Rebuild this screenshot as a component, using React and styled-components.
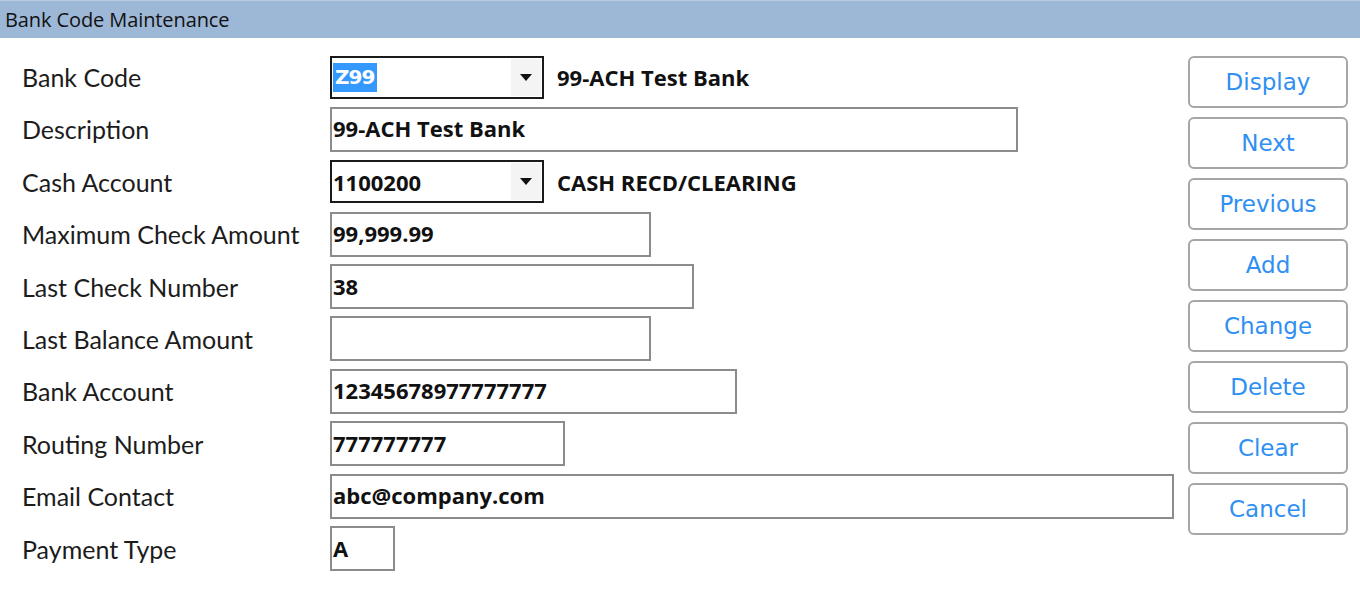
import React from "react";
import styled, { createGlobalStyle } from "styled-components";

const GlobalStyle = createGlobalStyle`
  html, body {
    margin: 0;
    padding: 0;
    background: #ffffff;
  }
  body {
    font-family: "Lato", "Open Sans", sans-serif;
  }
`;

const Window = styled.div`
  width: 1360px;
  height: 615px;
  background: #ffffff;
  overflow: hidden;
`;

const TitleBar = styled.div`
  height: 38px;
  background: #9db7d7;
  border-top: 1px solid #b8cbe3;
  box-sizing: border-box;
  display: flex;
  align-items: center;
  padding-left: 5px;
  font-family: "Open Sans", sans-serif;
  font-size: 20px;
  letter-spacing: -0.1px;
  color: #111;
`;

const Body = styled.div`
  display: flex;
  padding: 17px 12px 0 22px;
`;

const Form = styled.div`
  flex: 1;
  display: grid;
  grid-template-columns: 308px 1fr;
  grid-auto-rows: 44px;
  row-gap: 8.4px;
  align-items: center;
`;

const Label = styled.div`
  font-family: "Lato", sans-serif;
  font-size: 25px;
  color: #1c1c1c;
`;

const FieldRow = styled.div`
  display: flex;
  align-items: center;
  gap: 13px;
`;

const TextBox = styled.div`
  width: ${(p) => p.$w}px;
  height: 45px;
  box-sizing: border-box;
  border: 2px solid #8c8c8c;
  background: #fff;
  display: flex;
  align-items: center;
  padding: 0 0 2px 1px;
  font-family: "Open Sans", sans-serif;
  font-weight: 700;
  font-size: 22px;
  color: #111;
`;

const Combo = styled.div`
  width: 214px;
  height: 43px;
  box-sizing: border-box;
  border: 2px solid #1a1a1a;
  background: #fff;
  display: flex;
  align-items: center;
  padding-left: 1px;
  font-family: "Open Sans", sans-serif;
  font-weight: 700;
  font-size: 22px;
  color: #111;
`;

const ComboValue = styled.div`
  flex: 1;
  display: flex;
  align-items: center;
`;

const Selected = styled.span`
  background: #3399ff;
  color: #fff;
  padding: 1px 3px 2px 2px;
  line-height: 26px;
  font-family: "DejaVu Sans", sans-serif;
  font-size: 20px;
  letter-spacing: -1px;
`;

const DropButton = styled.div`
  width: 30px;
  align-self: stretch;
  margin: 1px 1px 1px 0;
  background: #f4f4f4;
  display: flex;
  align-items: center;
  justify-content: center;
`;

const Arrow = styled.div`
  width: 0;
  height: 0;
  border-left: 6px solid transparent;
  border-right: 6px solid transparent;
  border-top: 7px solid #111;
`;

const SideText = styled.div`
  font-family: "Open Sans", sans-serif;
  font-weight: 700;
  font-size: 22px;
  color: #111;
`;

const Buttons = styled.div`
  display: flex;
  flex-direction: column;
  gap: 9px;
  padding-top: 1px;
`;

const Button = styled.button`
  width: 160px;
  height: 52px;
  box-sizing: border-box;
  border: 2px solid #a6a6a6;
  border-radius: 6px;
  background: #fff;
  color: #2f8ff2;
  font-family: "DejaVu Sans", sans-serif;
  font-size: 23px;
  padding: 0;
  cursor: pointer;
`;

const ComboField = ({ value, selected, side }) => (
  <FieldRow>
    <Combo>
      <ComboValue>{selected ? <Selected>{value}</Selected> : value}</ComboValue>
      <DropButton>
        <Arrow />
      </DropButton>
    </Combo>
    <SideText>{side}</SideText>
  </FieldRow>
);

const rows = [
  { label: "Description", value: "99-ACH Test Bank", w: 688 },
  null,
  { label: "Maximum Check Amount", value: "99,999.99", w: 321 },
  { label: "Last Check Number", value: "38", w: 364 },
  { label: "Last Balance Amount", value: "", w: 321 },
  { label: "Bank Account", value: "12345678977777777", w: 407 },
  { label: "Routing Number", value: "777777777", w: 235 },
  { label: "Email Contact", value: "abc@company.com", w: 844 },
  { label: "Payment Type", value: "A", w: 65 },
];

const actions = ["Display", "Next", "Previous", "Add", "Change", "Delete", "Clear", "Cancel"];

export default function App() {
  return (
    <Window>
      <GlobalStyle />
      <TitleBar>Bank Code Maintenance</TitleBar>
      <Body>
        <Form>
          <Label>Bank Code</Label>
          <ComboField value="Z99" selected side="99-ACH Test Bank" />
          {rows.map((r, i) =>
            r ? (
              <React.Fragment key={r.label}>
                <Label>{r.label}</Label>
                <TextBox $w={r.w}>{r.value}</TextBox>
              </React.Fragment>
            ) : (
              <React.Fragment key={i}>
                <Label>Cash Account</Label>
                <ComboField value="1100200" side="CASH RECD/CLEARING" />
              </React.Fragment>
            )
          )}
        </Form>
        <Buttons>
          {actions.map((a) => (
            <Button key={a}>{a}</Button>
          ))}
        </Buttons>
      </Body>
    </Window>
  );
}
